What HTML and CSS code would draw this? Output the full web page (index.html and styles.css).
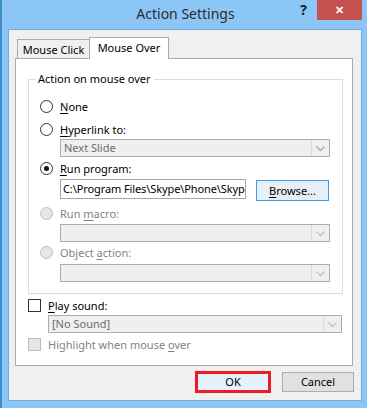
FILE: index.html
```html
<!DOCTYPE html>
<html lang="en">
<head>
    <meta charset="UTF-8">
    <title>Action Settings</title>
    <link rel="stylesheet" href="styles.css">
</head>
<body>
    <div class="frame">
        <div class="titlebar">
            <div class="title">Action Settings</div>
            <div class="controls">
                <span class="help">?</span>
                <span class="close">&#x2715;</span>
            </div>
        </div>
        <div class="client">
            <div class="tabs">
                <div class="tab">Mouse Click</div>
                <div class="tab active">Mouse Over</div>
            </div>
            <div class="panel">
                <div class="group">
                    <div class="group-title">Action on mouse over</div>

                    <div class="row row-none">
                        <span class="radio"></span>
                        <span class="label"><u>N</u>one</span>
                    </div>
                    <div class="row row-link">
                        <span class="radio"></span>
                        <span class="label"><u>H</u>yperlink to:</span>
                    </div>
                    <div class="select sel-link">
                        <span class="select-text">Next Slide</span>
                        <span class="select-btn"><svg width="9" height="6" viewBox="0 0 9 6"><polyline points="0.5,0.5 4.5,4.5 8.5,0.5" fill="none" stroke="#a8a8a8" stroke-width="1.4"/></svg></span>
                    </div>
                    <div class="row row-run">
                        <span class="radio checked"></span>
                        <span class="label"><u>R</u>un program:</span>
                    </div>
                    <div class="path-row">
                        <div class="path-input">C:\Program Files\Skype\Phone\Skyp</div>
                        <div class="button browse"><u>B</u>rowse...</div>
                    </div>
                    <div class="row row-macro disabled">
                        <span class="radio"></span>
                        <span class="label">Run <u>m</u>acro:</span>
                    </div>
                    <div class="select sel-macro">
                        <span class="select-text"></span>
                        <span class="select-btn"><svg width="9" height="6" viewBox="0 0 9 6"><polyline points="0.5,0.5 4.5,4.5 8.5,0.5" fill="none" stroke="#c4c4c4" stroke-width="1.4"/></svg></span>
                    </div>
                    <div class="row row-object disabled">
                        <span class="radio"></span>
                        <span class="label">Object <u>a</u>ction:</span>
                    </div>
                    <div class="select sel-object">
                        <span class="select-text"></span>
                        <span class="select-btn"><svg width="9" height="6" viewBox="0 0 9 6"><polyline points="0.5,0.5 4.5,4.5 8.5,0.5" fill="none" stroke="#c4c4c4" stroke-width="1.4"/></svg></span>
                    </div>
                </div>

                <div class="row row-sound">
                    <span class="checkbox"></span>
                    <span class="label"><u>P</u>lay sound:</span>
                </div>
                <div class="select sel-sound">
                    <span class="select-text">[No Sound]</span>
                    <span class="select-btn"><svg width="9" height="6" viewBox="0 0 9 6"><polyline points="0.5,0.5 4.5,4.5 8.5,0.5" fill="none" stroke="#c4c4c4" stroke-width="1.4"/></svg></span>
                </div>
                <div class="row row-highlight disabled">
                    <span class="checkbox"></span>
                    <span class="label">Highlight when mouse <u>o</u>ver</span>
                </div>
            </div>
            <div class="buttons">
                <div class="button ok">OK</div>
                <div class="button cancel">Cancel</div>
            </div>
        </div>
    </div>
</body>
</html>
```

FILE: styles.css
```css
* {
    box-sizing: border-box;
}

body {
    margin: 0;
    font-family: "Noto Sans", "Open Sans", sans-serif;
    font-size: 11px;
    color: #000000;
}

u {
    text-decoration-thickness: 1px;
    text-underline-offset: 2px;
}

.frame {
    width: 367px;
    height: 408px;
    background: #8cc6f7;
    border-left: 2px solid #3f8fc7;
    overflow: hidden;
}

/* title bar */
.titlebar {
    position: relative;
    height: 29px;
}

.title {
    text-align: center;
    font-size: 14px;
    line-height: 28px;
    color: #2b2b2b;
    padding-left: 2px;
}

.controls {
    position: absolute;
    top: 0;
    right: 5px;
    display: flex;
}

.help {
    font-weight: bold;
    font-size: 14px;
    line-height: 20px;
    color: #1e1e1e;
    margin-right: 10px;
}

.close {
    width: 45px;
    height: 20px;
    background: #c75050;
    color: #ffffff;
    font-size: 11px;
    font-weight: bold;
    text-align: center;
    line-height: 20px;
}

/* dialog body */
.client {
    margin-left: 6px;
    width: 354px;
    height: 372px;
    background: #f0f0f0;
    border: 1px solid #78acd8;
    padding-top: 7px;
}

.tabs {
    display: flex;
    align-items: flex-end;
    height: 22px;
    margin-left: 8px;
    margin-bottom: -1px;
    position: relative;
    z-index: 1;
}

.tab {
    height: 20px;
    width: 73px;
    border: 1px solid #acacac;
    background: #f0f0f0;
    text-align: center;
    line-height: 19px;
}

.tab.active {
    height: 22px;
    width: 80px;
    margin-left: -1px;
    background: #ffffff;
    border-bottom: none;
    line-height: 20px;
}

.panel {
    margin-left: 6px;
    width: 338px;
    height: 308px;
    background: #ffffff;
    border: 1px solid #acacac;
    padding: 20px 9px 0 12px;
}

.group {
    position: relative;
    height: 215px;
    border: 1px solid #dcdcdc;
    padding: 16px 0 0 11px;
}

.group-title {
    position: absolute;
    top: -9px;
    left: 6px;
    padding: 0 3px;
    background: #ffffff;
    line-height: 16px;
}

.row {
    display: flex;
    align-items: center;
    height: 20px;
    gap: 7px;
}

.row-link { margin-top: 3px; }
.row-run { margin-top: 1px; }
.row-macro { margin-top: 2px; }
.row-object { margin-top: 0; }

.radio {
    width: 13px;
    height: 13px;
    border-radius: 50%;
    border: 1px solid #333333;
    background: #ffffff;
    display: flex;
    align-items: center;
    justify-content: center;
}

.radio.checked::after {
    content: "";
    width: 5px;
    height: 5px;
    border-radius: 50%;
    background: #111111;
}

.checkbox {
    width: 13px;
    height: 13px;
    border: 1px solid #333333;
    background: #ffffff;
}

.disabled .label {
    color: #838383;
}

.disabled .radio,
.disabled .checkbox {
    border-color: #bcbcbc;
    background: #e6e6e6;
}

.select {
    display: flex;
    height: 18px;
    width: 270px;
    margin-left: 20px;
    border: 1px solid #adadad;
    background: #efefef;
    color: #6d6d6d;
}

.select-text {
    flex: 1;
    padding-left: 3px;
    line-height: 16px;
}

.select-btn {
    width: 18px;
    border-left: 1px solid #dcdcdc;
    display: flex;
    align-items: center;
    justify-content: center;
    padding-top: 2px;
}

.sel-macro { margin-top: 1px; }
.sel-object { margin-top: 2px; }

.path-row {
    display: flex;
    align-items: flex-start;
    gap: 10px;
    margin: 1px 0 0 20px;
    height: 22px;
}

.path-input {
    width: 186px;
    height: 20px;
    border: 1px solid #a6a6a6;
    background: #ffffff;
    padding-left: 2px;
    line-height: 18px;
    letter-spacing: -0.1px;
    white-space: nowrap;
    overflow: hidden;
}

.button {
    height: 20px;
    border: 1px solid #adadad;
    background: #e1e1e1;
    text-align: center;
    line-height: 18px;
}

.browse {
    width: 73px;
    height: 21px;
    margin-top: 1px;
    border-color: #3c9ce8;
    background: #e8eef6;
    line-height: 19px;
}

.row-sound {
    margin-top: 1px;
}

.sel-sound {
    width: 294px;
    margin-top: 0;
}

.row-highlight {
    margin-top: 1px;
}

/* bottom buttons */
.buttons {
    display: flex;
    justify-content: flex-end;
    align-items: center;
    gap: 11px;
    margin: 5px 7px 0 0;
}

.ok {
    width: 76px;
    height: 22px;
    border: 3px solid #ec1c24;
    background: #e5f1fb;
    line-height: 16px;
}

.cancel {
    width: 72px;
}
```
